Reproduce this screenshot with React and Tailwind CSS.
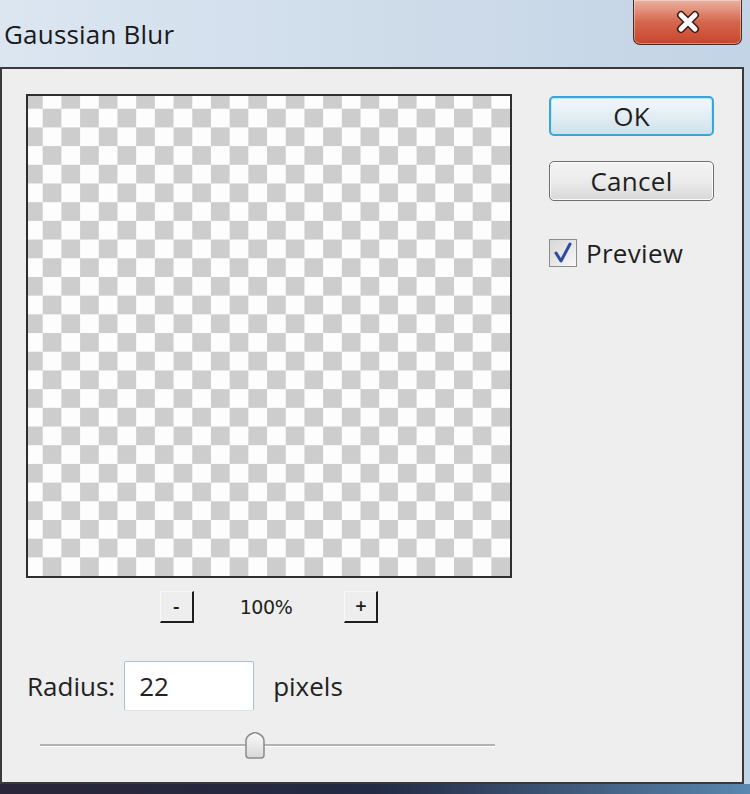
export default function App() {
  return (
    <div className="w-[750px] h-[794px] flex flex-col bg-gradient-to-r from-[#dbe6f1] via-[#cfdcea] to-[#c3d4e6] font-['Open_Sans',sans-serif] text-[#1c1c1c] overflow-hidden">
      {/* Title bar */}
      <div className="h-[67px] flex items-start justify-between shrink-0">
        <div className="pl-[4px] pt-[17px] text-[26px] leading-[34px] tracking-[0.2px] text-[#1a1a1a]">Gaussian Blur</div>
        <div className="mr-[8px] w-[109px] h-[45px] rounded-b-[7px] border border-t-0 border-[#4a2a24] bg-gradient-to-b from-[#eab2a2] via-[#d4664c] to-[#c9442c] shadow-[inset_0_0_0_1px_rgba(255,255,255,0.35)] flex items-center justify-center">
          <svg width="30" height="24" viewBox="0 0 30 24">
            <path d="M8 5 L22 19 M22 5 L8 19" stroke="#3a1a14" strokeWidth="8" strokeLinecap="round" />
            <path d="M8 5 L22 19 M22 5 L8 19" stroke="#ffffff" strokeWidth="5" strokeLinecap="round" />
          </svg>
        </div>
      </div>
      {/* Body row */}
      <div className="flex shrink-0">
        <div className="w-[744px] h-[717px] border-2 border-[#3a3a3a] bg-[#eeeeee] flex">
          {/* Left column */}
          <div className="pl-[24px] pt-[25px] flex flex-col">
            <div className="w-[486px] h-[484px] border-2 border-[#2e2e2e] bg-[conic-gradient(#fdfdfd_25%,#cdcdcd_0_50%,#fdfdfd_0_75%,#cdcdcd_0)] bg-[length:37.4px_37.4px] bg-[position:-4px_-6px]" />
            <div className="mt-[13px] w-[486px] flex items-center justify-center">
              <div className="w-[34px] h-[32px] border-t border-l border-[#f8f8f8] border-r-2 border-b-2 border-r-[#1e1e1e] border-b-[#1e1e1e] flex items-center justify-center text-[20px] leading-none pb-[2px] font-semibold">-</div>
              <div className="ml-[46px] mr-[52px] text-[19px] leading-none font-['DejaVu_Sans',sans-serif] text-[#222] tracking-[-0.4px]">100%</div>
              <div className="w-[34px] h-[32px] border-t border-l border-[#f8f8f8] border-r-2 border-b-2 border-r-[#1e1e1e] border-b-[#1e1e1e] flex items-center justify-center text-[20px] leading-none pb-[2px] font-semibold">+</div>
            </div>
            <div className="mt-[38px] flex items-center">
              <span className="ml-[1px] text-[26px] leading-none text-[#222]">Radius:</span>
              <div className="ml-[9px] w-[130px] h-[50px] bg-white border border-[#a9c0d8] border-b-[#dde3ea] rounded-[2px] flex items-center pl-[14px] text-[26px] text-[#222]">22</div>
              <span className="ml-[19px] text-[26px] leading-none text-[#222]">pixels</span>
            </div>
            <div className="mt-[21px] ml-[14px] relative w-[455px] h-[26px] flex items-center">
              <div className="w-full h-[2px] bg-[#b2b2b2] shadow-[0_1px_0_#ffffff]" />
              <svg className="absolute left-[204px] top-0" width="22" height="27" viewBox="0 0 22 27">
                <defs>
                  <linearGradient id="thumb" x1="0" y1="0" x2="0" y2="1">
                    <stop offset="0" stopColor="#fafafa" />
                    <stop offset="1" stopColor="#d8d8d8" />
                  </linearGradient>
                </defs>
                <path d="M2 9 Q2 5 6 2.5 L9 1 Q11 0.2 13 1 L16 2.5 Q20 5 20 9 L20 23 Q20 26 17 26 L5 26 Q2 26 2 23 Z" fill="url(#thumb)" stroke="#8a8a8a" strokeWidth="1.5" />
              </svg>
            </div>
          </div>
          {/* Right column */}
          <div className="ml-[37px] pt-[27px] flex flex-col">
            <div className="w-[165px] h-[40px] rounded-[5px] border-2 border-[#39a6d8] bg-gradient-to-b from-[#f1f8fc] via-[#e3eef4] to-[#cfe0ea] shadow-[inset_0_0_0_1px_#bfe8f8] flex items-center justify-center text-[26px] leading-none text-[#1f1f1f] tracking-[0.3px]">OK</div>
            <div className="mt-[25px] w-[165px] h-[40px] rounded-[5px] border-[1.5px] border-[#6f6f6f] bg-gradient-to-b from-[#f4f4f4] via-[#ebebeb] to-[#d8d8d8] shadow-[inset_0_0_0_1px_#fbfbfb] flex items-center justify-center text-[26px] leading-none text-[#1f1f1f] tracking-[0.3px]">Cancel</div>
            <div className="mt-[38px] flex items-center">
              <div className="w-[28px] h-[28px] border border-[#8c8c8c] bg-gradient-to-br from-[#d6d6d6] to-[#f8f8f8] flex items-center justify-center">
                <svg width="24" height="24" viewBox="0 0 24 24">
                  <path d="M5 12 L10 20 L19 3" fill="none" stroke="#2f4aa0" strokeWidth="3" strokeLinejoin="round" strokeLinecap="round" />
                </svg>
              </div>
              <span className="ml-[9px] text-[26px] leading-none text-[#1f1f1f] tracking-[0.3px]">Preview</span>
            </div>
          </div>
        </div>
        <div className="flex-1" />
      </div>
      <div className="flex-1 bg-gradient-to-r from-[#2a2538] via-[#232a44] to-[#5a88b0]" />
    </div>
  );
}
